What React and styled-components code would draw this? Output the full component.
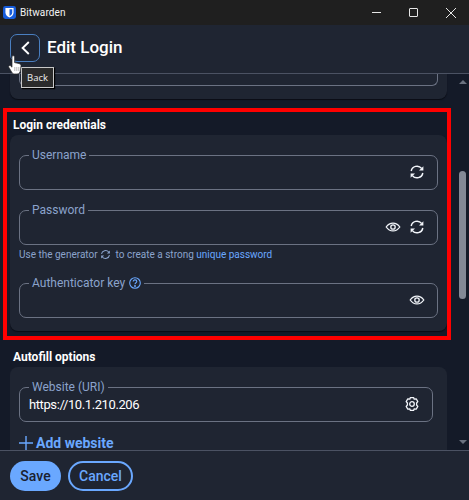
import React from 'react';
import styled, { createGlobalStyle } from 'styled-components';

const GlobalStyle = createGlobalStyle`
  html, body { margin: 0; padding: 0; background: #141a28; }
  * { box-sizing: border-box; }
`

//icons
const RefreshIcon = ({ size = 16 }) => (
  <svg width={size} height={size} viewBox="0 0 16 16" fill="none" stroke="currentColor" strokeWidth="1.5">
    <path d="M2.2 7A5.9 5.9 0 0 1 12.6 4.4" />
    <path d="M13.8 9A5.9 5.9 0 0 1 3.4 11.6" />
    <path d="M14.4 2.2V6.6H10Z" fill="currentColor" stroke="none" />
    <path d="M1.6 13.8V9.4H6Z" fill="currentColor" stroke="none" />
  </svg>
)

const EyeIcon = () => (
  <svg width="16" height="16" viewBox="0 0 16 16" fill="none" stroke="currentColor" strokeWidth="1.3">
    <path d="M1.2 8C3 5.4 5.3 4.1 8 4.1S13 5.4 14.8 8C13 10.6 10.7 11.9 8 11.9S3 10.6 1.2 8Z" />
    <circle cx="8" cy="8" r="2.2" />
  </svg>
)

const GearIcon = () => (
  <svg width="16" height="16" viewBox="0 0 16 16" fill="none" stroke="currentColor" strokeWidth="1.3">
    <path d="M6.4 1.6H9.6L10.2 3.2L12.2 2.8L13.8 5.6L12.6 7V9L13.8 10.4L12.2 13.2L10.2 12.8L9.6 14.4H6.4L5.8 12.8L3.8 13.2L2.2 10.4L3.4 9V7L2.2 5.6L3.8 2.8L5.8 3.2Z" strokeLinejoin="round" />
    <circle cx="8" cy="8" r="2.3" />
  </svg>
)

const HelpIcon = () => (
  <svg width="12" height="12" viewBox="0 0 12 12" fill="none" stroke="#6aa8ff" strokeWidth="1.1">
    <circle cx="6" cy="6" r="5.3" />
    <path d="M4.2 4.6C4.2 3.5 5 2.9 6 2.9S7.8 3.6 7.8 4.5C7.8 5.7 6 5.8 6 7.3" />
    <circle cx="6" cy="9" r=".4" fill="#6aa8ff" />
  </svg>
)

const ShieldLogo = () => (
  <svg width="13" height="13" viewBox="0 0 16 16">
    <rect width="16" height="16" rx="3" fill="#175ddc" />
    <path d="M3 2.4H13V8.2C13 11 10.4 12.9 8 14.2C5.6 12.9 3 11 3 8.2Z" fill="#fff" />
    <path d="M8 4H11.4V8.2C11.4 10 9.6 11.4 8 12.3Z" fill="#175ddc" />
  </svg>
)

const HandCursor = () => (
  <svg width="14" height="20" viewBox="0 0 14 20">
    <path d="M4 1.8C4 .4 6.6 .4 6.6 1.8V7.6L11 8.6C12.4 9 13.2 9.8 13 11L12.5 15C12.2 17.4 11 19 9 19H6.8C5.2 19 4.4 18.4 3.6 17L.8 12.2C.2 11 1.6 9.8 2.6 10.8L4 12.2Z" fill="#fff" stroke="#2a2a2a" strokeWidth=".7" />
    <path d="M6.8 12V16M8.8 12V16M10.8 12V16" stroke="#8a8a8a" strokeWidth=".6" />
  </svg>
)

const Field = ({ label, help, value, wide = true, children }) => (
  <FieldBox $wide={wide}>
    <FieldLabel>
      {label}
      {help && <HelpMark><HelpIcon /></HelpMark>}
    </FieldLabel>
    <FieldRow>
      <FieldValue>{value}</FieldValue>
      <FieldIcons>{children}</FieldIcons>
    </FieldRow>
  </FieldBox>
)

const App = () => {
  return (
    <Window>
      <GlobalStyle />
      <TitleBar>
        <ShieldLogo />
        <AppName>Bitwarden</AppName>
        <WinControls>
          <WinMin />
          <WinMax />
          <WinClose>
            <svg width="10" height="10" viewBox="0 0 10 10" stroke="#e6e6e6" strokeWidth="1"><path d="M0 0L10 10M10 0L0 10" /></svg>
          </WinClose>
        </WinControls>
      </TitleBar>

      <Header>
        <BackButton>
          <svg width="9" height="14" viewBox="0 0 9 14" fill="none" stroke="#fff" strokeWidth="1.9"><path d="M7.8 1L1.6 7L7.8 13" /></svg>
        </BackButton>
        <Title>Edit Login</Title>
      </Header>

      <Body>
        <Scroller>
          <ClippedCard>
            <ClippedField />
          </ClippedCard>

          <SectionTitle>Login credentials</SectionTitle>
          <Card>
            <Field label="Username">
              <IconSlot><RefreshIcon /></IconSlot>
            </Field>
            <Field label="Password">
              <IconSlot><EyeIcon /></IconSlot>
              <IconSlot><RefreshIcon /></IconSlot>
            </Field>
            <Hint>
              Use the generator <RefreshIcon size={11} /> to create a strong <a>unique password</a>
            </Hint>
            <Field label="Authenticator key" help>
              <IconSlot><EyeIcon /></IconSlot>
            </Field>
          </Card>

          <SectionTitle>Autofill options</SectionTitle>
          <LastCard>
            <Field label="Website (URI)" value="https://10.1.210.206" wide={false}>
              <IconSlot><GearIcon /></IconSlot>
            </Field>
            <AddLink>
              <svg width="14" height="14" viewBox="0 0 14 14" stroke="currentColor" strokeWidth="1.4"><path d="M7 0V14M0 7H14" /></svg>
              Add website
            </AddLink>
          </LastCard>
        </Scroller>

        <ScrollTrack>
          <Arrow />
          <Thumb />
          <Arrow $down />
        </ScrollTrack>
      </Body>

      <Footer>
        <SaveButton>Save</SaveButton>
        <CancelButton>Cancel</CancelButton>
      </Footer>

      <RedBox />
      <Tooltip>Back</Tooltip>
      <Cursor><HandCursor /></Cursor>
    </Window>
  )
}

//styled components
const Window = styled.div`
  position: relative;
  width: 469px;
  height: 500px;
  overflow: hidden;
  display: flex;
  flex-direction: column;
  background: #141a28;
  font-family: Roboto, "Liberation Sans", sans-serif;
`

const TitleBar = styled.div`
  height: 25px;
  flex: none;
  display: flex;
  align-items: center;
  padding-left: 3px;
  background: #1f1f1f;
`

const AppName = styled.span`
  margin-left: 4px;
  font-family: Roboto, sans-serif;
  font-size: 10px;
  letter-spacing: .1px;
  color: #f4f4f4;
`

const WinControls = styled.div`
  margin-left: auto;
  display: flex;
  align-items: center;
  padding-right: 13px;
  gap: 28px;
`

const WinMin = styled.div`
  width: 9px;
  height: 1px;
  background: #e6e6e6;
`

const WinMax = styled.div`
  width: 9px;
  height: 9px;
  border: 1px solid #e6e6e6;
  border-radius: 1px;
`

const WinClose = styled.div`
  display: flex;
`

const Header = styled.div`
  height: 49px;
  flex: none;
  display: flex;
  align-items: center;
  padding: 0 0 2px 10px;
  background: #1f2532;
  border-bottom: 1px solid #4b5263;
`

const BackButton = styled.button`
  width: 30px;
  height: 28px;
  display: flex;
  align-items: center;
  justify-content: center;
  padding: 0;
  background: transparent;
  border: 1px solid #4a7fc0;
  border-radius: 7px;
`

const Title = styled.h1`
  margin: 0 0 2px 7px;
  font-size: 17px;
  font-weight: 500;
  color: #fff;
`

const Body = styled.div`
  flex: 1;
  min-height: 0;
  display: flex;
`

const Scroller = styled.div`
  flex: 1;
  min-width: 0;
  overflow: hidden;
  padding: 0 12px 0 10px;
`

const ClippedCard = styled.div`
  height: 25px;
  padding-right: 9px;
  background: #1f2532;
  border-radius: 0 0 8px 8px;
  padding-left: 9px;
  box-shadow: 0 1px 1px #0a0d15;
`

const ClippedField = styled.div`
  height: 12px;
  border: 1px solid #6b7283;
  border-top: 0;
  border-radius: 0 0 6px 6px;
`

const SectionTitle = styled.h2`
  margin: 19px 0 0 3px;
  height: 16px;
  font-size: 12px;
  line-height: 14px;
  font-weight: 700;
  color: #fff;
`

const Card = styled.div`
  margin-top: 1px;
  height: 196px;
  padding: 13px 9px 0;
  background: #1f2532;
  border-radius: 8px;
  box-shadow: 0 1px 1px #0a0d15;
  display: flex;
  flex-direction: column;
`

const LastCard = styled(Card)`
  height: 90px;
  border-radius: 8px 8px 0 0;
  box-shadow: none;
`

const FieldBox = styled.fieldset`
  margin: 0 ${p => (p.$wide ? '0' : '5px')} 0 0;
  padding: 0 9px;
  height: 42px;
  flex: none;
  border: 1px solid #6b7283;
  border-radius: 7px;
  & + & { margin-top: 13px; }
`

const FieldLabel = styled.legend`
  padding: 0 3px;
  height: 14px;
  font-size: 12px;
  line-height: 14px;
  color: #8ba3cc;
  display: flex;
  align-items: center;
`

const HelpMark = styled.span`
  display: flex;
  margin-left: 4px;
`

const FieldRow = styled.div`
  height: 20px;
  display: flex;
  align-items: center;
`

const FieldValue = styled.div`
  font-size: 13px;
  letter-spacing: -.4px;
  color: #fff;
`

const FieldIcons = styled.div`
  margin-left: auto;
  margin-right: 3px;
  display: flex;
  gap: 8px;
  color: #f2f5fa;
`

const IconSlot = styled.span`
  display: flex;
`

const Hint = styled.div`
  margin: 3px 0 15px;
  height: 13px;
  flex: none;
  font-size: 10px;
  line-height: 13px;
  color: #8ba3cc;
  display: flex;
  align-items: center;
  white-space: pre;
  a { color: #6aa8ff; }
  svg { margin: 0 2px 0 0; }
`

const AddLink = styled.div`
  margin-top: 13px;
  display: flex;
  align-items: center;
  gap: 3px;
  font-size: 14px;
  font-weight: 700;
  color: #6aa8ff;
`

const ScrollTrack = styled.div`
  width: 10px;
  flex: none;
  position: relative;
  display: flex;
  flex-direction: column;
  align-items: center;
  justify-content: space-between;
  padding: 6px 0;
`

const Arrow = styled.div`
  width: 0;
  height: 0;
  margin-right: 3px;
  border-left: 4px solid transparent;
  border-right: 4px solid transparent;
  ${p => (p.$down ? 'border-top: 4px solid #6b7280;' : 'border-bottom: 4px solid #6b7280;')}
`

const Thumb = styled.div`
  width: 7px;
  height: 128px;
  position: absolute;
  top: 97px;
  left: 0;
  background: #838996;
  border-radius: 4px;
`

const Footer = styled.div`
  height: 50px;
  flex: none;
  display: flex;
  align-items: center;
  gap: 7px;
  padding-left: 10px;
  background: #1f2532;
  border-top: 1px solid #4b5263;
`

const SaveButton = styled.button`
  width: 51px;
  height: 30px;
  padding: 0;
  font-family: inherit;
  font-size: 14px;
  font-weight: 500;
  color: #1a2130;
  background: #6aa8ff;
  border: 0;
  border-radius: 15px;
`

const CancelButton = styled(SaveButton)`
  width: 65px;
  color: #6aa8ff;
  background: transparent;
  border: 2px solid #6aa8ff;
`

const RedBox = styled.div`
  position: absolute;
  left: 3px;
  top: 108px;
  width: 448px;
  height: 232px;
  border: 4px solid #ff0000;
  pointer-events: none;
`

const Tooltip = styled.div`
  position: absolute;
  left: 21px;
  top: 67px;
  width: 33px;
  height: 21px;
  display: flex;
  align-items: center;
  justify-content: center;
  font-family: "Open Sans", sans-serif;
  font-size: 9.5px;
  color: #f0f0f0;
  background: #2b2b2b;
  border: 1px solid #c8c8c8;
  box-shadow: 1px 1px 1px #000;
`

const Cursor = styled.div`
  position: absolute;
  left: 8px;
  top: 55px;
`

export default App;
